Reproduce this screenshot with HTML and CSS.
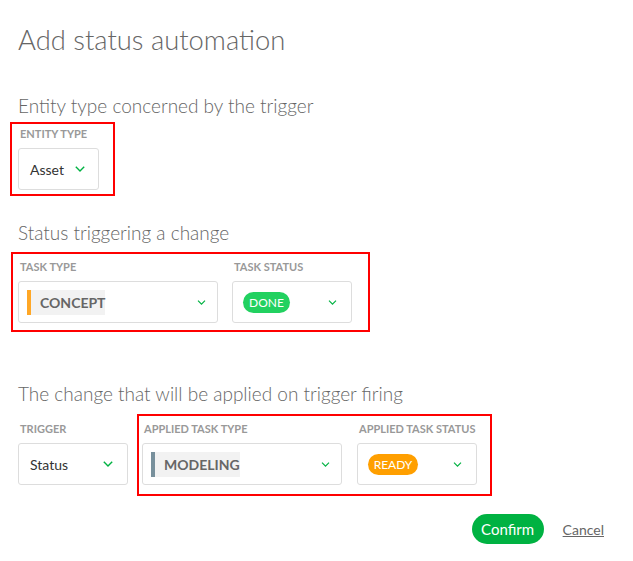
FILE: index.html
```html
<!DOCTYPE html>
<html>
<head>
<meta charset="utf-8">
<link rel="stylesheet" href="styles.css">
</head>
<body>
<div class="modal">
  <h1 class="title">Add status automation</h1>

  <h2 class="subtitle sub-1">Entity type concerned by the trigger</h2>
  <div class="mark mark-entity">
    <div class="field">
      <div class="label">ENTITY TYPE</div>
      <div class="select sel-entity">
        <span class="value">Asset</span>
        <svg class="chev" viewBox="0 0 10 6" width="10" height="6"><path d="M0.8 0.8 L5 5 L9.2 0.8" /></svg>
      </div>
    </div>
  </div>

  <h2 class="subtitle sub-2">Status triggering a change</h2>
  <div class="mark mark-status">
    <div class="row">
      <div class="field">
        <div class="label">TASK TYPE</div>
        <div class="select sel-type">
          <span class="tasktype tt-concept">CONCEPT</span>
          <svg class="chev" viewBox="0 0 10 6" width="9" height="5"><path d="M0.8 0.8 L5 5 L9.2 0.8" /></svg>
        </div>
      </div>
      <div class="field">
        <div class="label">TASK STATUS</div>
        <div class="select sel-status">
          <span class="pill pill-done">DONE</span>
          <svg class="chev" viewBox="0 0 10 6" width="9" height="5"><path d="M0.8 0.8 L5 5 L9.2 0.8" /></svg>
        </div>
      </div>
    </div>
  </div>

  <h2 class="subtitle sub-3">The change that will be applied on trigger firing</h2>
  <div class="row change-row">
    <div class="field trigger-field">
      <div class="label">TRIGGER</div>
      <div class="select sel-trigger">
        <span class="value">Status</span>
        <svg class="chev" viewBox="0 0 10 6" width="10" height="6"><path d="M0.8 0.8 L5 5 L9.2 0.8" /></svg>
      </div>
    </div>
    <div class="mark mark-applied">
      <div class="row">
        <div class="field">
          <div class="label">APPLIED TASK TYPE</div>
          <div class="select sel-type">
            <span class="tasktype tt-modeling">MODELING</span>
            <svg class="chev" viewBox="0 0 10 6" width="9" height="5"><path d="M0.8 0.8 L5 5 L9.2 0.8" /></svg>
          </div>
        </div>
        <div class="field">
          <div class="label">APPLIED TASK STATUS</div>
          <div class="select sel-status">
            <span class="pill pill-ready">READY</span>
            <svg class="chev" viewBox="0 0 10 6" width="9" height="5"><path d="M0.8 0.8 L5 5 L9.2 0.8" /></svg>
          </div>
        </div>
      </div>
    </div>
  </div>

  <div class="buttons">
    <button class="btn-confirm">Confirm</button>
    <a class="cancel">Cancel</a>
  </div>
</div>
</body>
</html>
```

FILE: styles.css
```css
* { box-sizing: border-box; }
html, body { margin: 0; padding: 0; background: #fff; }
body {
  font-family: Lato, "Open Sans", "Liberation Sans", sans-serif;
  color: #333;
  width: 633px;
  height: 561px;
  overflow: hidden;
}
.modal {
  padding: 22px 29px 0 18px;
}
.title {
  margin: 0;
  font-size: 27.4px;
  line-height: 36px;
  font-weight: 300;
  color: #666;
}
.subtitle {
  margin: 0;
  font-size: 19px;
  line-height: 24px;
  font-weight: 300;
  color: #666;
}
.sub-1 { margin-top: 36px; margin-bottom: 4px; }
.sub-2 { margin-top: 25px; margin-bottom: 7px; }
.sub-3 { margin-top: 50px; margin-bottom: 8px; }

.mark {
  border: 2px solid #ff0000;
}
.mark-entity {
  width: 105px;
  margin-left: -8px;
  padding: 3px 0 4px 6px;
}
.mark-status {
  width: 359px;
  margin-left: -7px;
  padding: 6px 0 7px 5px;
}
.row {
  display: flex;
  gap: 14px;
}
.change-row {
  align-items: flex-start;
  gap: 9px;
}
.trigger-field {
  padding-top: 8px;
}
.mark-applied {
  width: 355px;
  padding: 6px 0 9px 3px;
}
.mark-applied .row { gap: 15px; }

.field {
  display: flex;
  flex-direction: column;
}
.label {
  font-size: 11px;
  line-height: 14px;
  font-weight: 700;
  color: #999;
  padding-left: 2px;
  margin-bottom: 7px;
  white-space: nowrap;
}
.select {
  height: 42px;
  border: 1px solid #ddd;
  border-radius: 3px;
  display: flex;
  align-items: center;
  justify-content: space-between;
  background: #fff;
}
.value {
  font-size: 14px;
  color: #333;
}
.chev {
  fill: none;
  stroke: #00b242;
  stroke-width: 1.4;
}
.sel-entity { width: 81px; padding: 0 13px 0 11px; }
.sel-trigger { width: 110px; padding: 0 14px 0 11px; }
.sel-type { width: 200px; padding: 0 11px 0 8px; }
.sel-status { width: 120px; padding: 0 14px 0 10px; }

.tasktype {
  display: inline-block;
  height: 25px;
  line-height: 25px;
  background: #f2f2f2;
  font-size: 14px;
  font-weight: 700;
  color: #666;
  padding: 0 9px 0 9px;
  border-left: 4px solid #ffa726;
}
.tt-concept { width: 78px; }
.tt-modeling { width: 89px; border-left-color: #78909c; }

.pill {
  display: inline-block;
  height: 21px;
  line-height: 21px;
  border-radius: 11px;
  color: #fff;
  font-size: 12px;
  font-weight: 400;
  text-align: center;
}
.pill-done { width: 47px; background: #22d160; }
.pill-ready { width: 50px; background: #ff9f00; }

.buttons {
  display: flex;
  justify-content: flex-end;
  align-items: center;
  gap: 19px;
  margin-top: 18px;
}
.btn-confirm {
  font-family: inherit;
  height: 30px;
  width: 72px;
  border: none;
  border-radius: 15px;
  background: #00b242;
  color: #fff;
  font-size: 15px;
  padding: 0;
}
.cancel {
  font-size: 14px;
  color: #666;
  text-decoration: underline;
}
```
